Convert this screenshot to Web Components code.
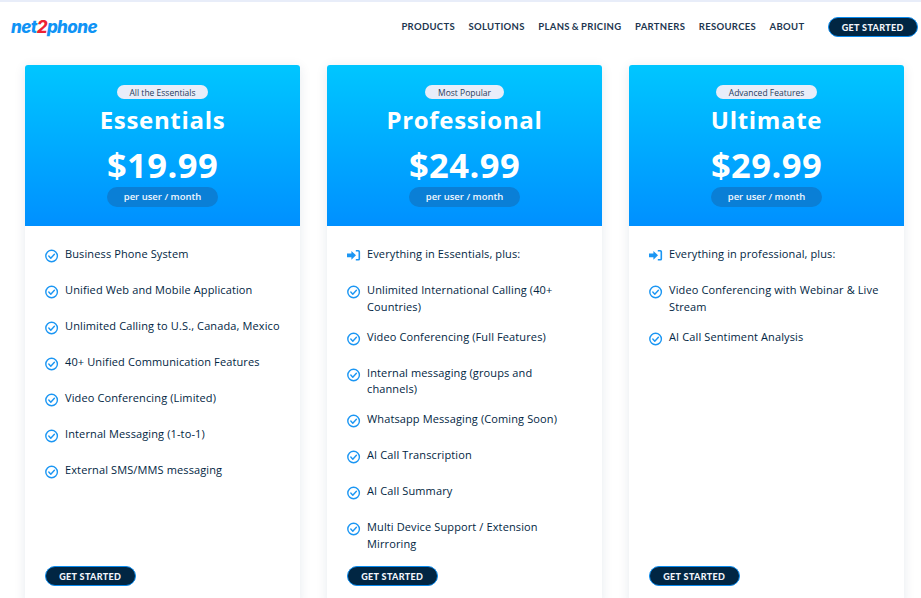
<!DOCTYPE html>
<html>
<head>
<meta charset="utf-8">
<style>
  html, body { margin: 0; background: #fff; height: 598px; overflow: hidden; }
  body { font-family: "Open Sans", sans-serif; color: #012643; }
</style>
</head>
<body>
<site-header></site-header>
<plan-grid>
  <plan-card tag="All the Essentials" name="Essentials" price="$19.99">
    <plan-item>Business Phone System</plan-item>
    <plan-item>Unified Web and Mobile Application</plan-item>
    <plan-item>Unlimited Calling to U.S., Canada, Mexico</plan-item>
    <plan-item>40+ Unified Communication Features</plan-item>
    <plan-item>Video Conferencing (Limited)</plan-item>
    <plan-item>Internal Messaging (1-to-1)</plan-item>
    <plan-item>External SMS/MMS messaging</plan-item>
  </plan-card>
  <plan-card tag="Most Popular" name="Professional" price="$24.99">
    <plan-item icon="enter">Everything in Essentials, plus:</plan-item>
    <plan-item>Unlimited International Calling (40+ Countries)</plan-item>
    <plan-item>Video Conferencing (Full Features)</plan-item>
    <plan-item>Internal messaging (groups and channels)</plan-item>
    <plan-item>Whatsapp Messaging (Coming Soon)</plan-item>
    <plan-item>AI Call Transcription</plan-item>
    <plan-item>AI Call Summary</plan-item>
    <plan-item>Multi Device Support / Extension Mirroring</plan-item>
  </plan-card>
  <plan-card tag="Advanced Features" name="Ultimate" price="$29.99">
    <plan-item icon="enter">Everything in professional, plus:</plan-item>
    <plan-item>Video Conferencing with Webinar &amp; Live Stream</plan-item>
    <plan-item>AI Call Sentiment Analysis</plan-item>
  </plan-card>
</plan-grid>

<script>
class CtaButton extends HTMLElement {
  constructor() {
    super();
    this.attachShadow({ mode: 'open' });
    this.shadowRoot.innerHTML = `
      <style>
        :host {
          display: inline-flex;
          align-items: center;
          justify-content: center;
          box-sizing: border-box;
          width: 90.5px;
          height: 20px;
          padding-top: 1px;
          border: 1px solid #0a8cf0;
          border-radius: 10px;
          background: #012643;
          color: #f2f5fb;
          font: 900 9px/1 Lato, sans-serif;
          letter-spacing: 0.35px;
          white-space: nowrap;
        }
      </style>
      <slot>GET STARTED</slot>
    `;
  }
}

class SiteHeader extends HTMLElement {
  constructor() {
    super();
    this.attachShadow({ mode: 'open' });
    const links = ['PRODUCTS', 'SOLUTIONS', 'PLANS & PRICING', 'PARTNERS', 'RESOURCES', 'ABOUT'];
    this.shadowRoot.innerHTML = `
      <style>
        :host {
          display: flex;
          align-items: center;
          box-sizing: border-box;
          height: 65px;
          padding: 0 3px 13px 11px;
          border-top: 2px solid #e8edf9;
        }
        .logo {
          font: italic 800 17px/1 Inter, sans-serif;
          letter-spacing: -0.6px;
          color: #0f93f5;
        }
        .logo b { color: #ee2233; font-weight: 800; }
        nav {
          display: flex;
          gap: 13.5px;
          margin-left: auto;
          font: 700 9.5px/1 Lato, sans-serif;
          letter-spacing: 0.32px;
          word-spacing: -0.6px;
          color: #1d3650;
        }
        cta-button { margin-left: 23px; }
      </style>
      <div class="logo">net<b>2</b>phone</div>
      <nav>${links.map(l => `<span>${l.replace('&', '&amp;')}</span>`).join('')}</nav>
      <cta-button></cta-button>
    `;
  }
}

class PlanGrid extends HTMLElement {
  constructor() {
    super();
    this.attachShadow({ mode: 'open' });
    this.shadowRoot.innerHTML = `
      <style>
        :host {
          display: grid;
          grid-template-columns: repeat(3, 275px);
          gap: 27px;
          padding: 0 0 0 25px;
        }
      </style>
      <slot></slot>
    `;
  }
}

class PlanCard extends HTMLElement {
  constructor() {
    super();
    this.attachShadow({ mode: 'open' });
    this.shadowRoot.innerHTML = `
      <style>
        :host {
          display: flex;
          flex-direction: column;
          border-radius: 3px;
          background: #fff;
          box-shadow: 0 2px 12px rgba(20, 50, 90, 0.1);
        }
        header {
          display: flex;
          flex-direction: column;
          align-items: center;
          box-sizing: border-box;
          height: 161px;
          padding-top: 20px;
          border-radius: 3px 3px 0 0;
          background: linear-gradient(#00c6ff, #0090ff);
          color: #fff;
        }
        .tag {
          box-sizing: border-box;
          height: 14px;
          padding: 0 12.5px;
          border-radius: 7px;
          background: #e8edf9;
          color: #2a3d5c;
          font-size: 8.5px;
          line-height: 15px;
          text-align: center;
        }
        h2 {
          margin: 6px 0 0;
          font-size: 24px;
          line-height: 30px;
          font-weight: 700;
          letter-spacing: 0.68px;
        }
        .price {
          margin-top: 9px;
          font-size: 34.5px;
          line-height: 42px;
          font-weight: 700;
          letter-spacing: 0.45px;
        }
        .per {
          box-sizing: border-box;
          width: 111px;
          height: 20px;
          margin-top: 1px;
          border-radius: 10px;
          background: #0a7fd6;
          color: #f0f7ff;
          font-size: 9.5px;
          font-weight: 600;
          line-height: 20px;
          text-align: center;
        }
        .body {
          flex: 1;
          display: flex;
          flex-direction: column;
          gap: 13px;
          padding: 20px 20px 19px;
        }
        cta-button { margin-top: auto; align-self: flex-start; }
      </style>
      <header>
        <div class="tag">${this.getAttribute('tag')}</div>
        <h2>${this.getAttribute('name')}</h2>
        <div class="price">${this.getAttribute('price')}</div>
        <div class="per">per user / month</div>
      </header>
      <div class="body">
        <slot></slot>
        <cta-button></cta-button>
      </div>
    `;
  }
}

const CHECK_ICON = `<svg width="14" height="14" viewBox="0 0 14 14" fill="none" stroke="#1b96f3" stroke-width="1.4">
  <circle cx="6.6" cy="7" r="5.8"/>
  <path d="M3.8 7.1l2 2.1 3.6-4" stroke-linecap="round" stroke-linejoin="round"/>
</svg>`;

const ENTER_ICON = `<svg width="14" height="14" viewBox="0 0 14 14" fill="#1b96f3">
  <path d="M0 4.4h4.4V1.9L9 6.3 4.4 10.7V8.2H0z"/>
  <path d="M8.8 1h2.6q1.7 0 1.7 1.7v7.2q0 1.7-1.7 1.7H8.8v-1.6h2.2q.5 0 .5-.5V3.1q0-.5-.5-.5H8.8z"/>
</svg>`;

class PlanItem extends HTMLElement {
  constructor() {
    super();
    this.attachShadow({ mode: 'open' });
    const icon = this.getAttribute('icon') === 'enter' ? ENTER_ICON : CHECK_ICON;
    this.shadowRoot.innerHTML = `
      <style>
        :host {
          display: flex;
          align-items: flex-start;
          gap: 6px;
          font-size: 11px;
          line-height: 16.8px;
          letter-spacing: 0.12px;
          color: #012643;
        }
        .icon { flex: none; box-sizing: border-box; height: 23px; padding-top: 3px; }
        svg { display: block; }
        .text { flex: 1; }
      </style>
      <span class="icon">${icon}</span>
      <span class="text"><slot></slot></span>
    `;
  }
}

customElements.define('cta-button', CtaButton);
customElements.define('site-header', SiteHeader);
customElements.define('plan-grid', PlanGrid);
customElements.define('plan-card', PlanCard);
customElements.define('plan-item', PlanItem);
</script>
</body>
</html>
